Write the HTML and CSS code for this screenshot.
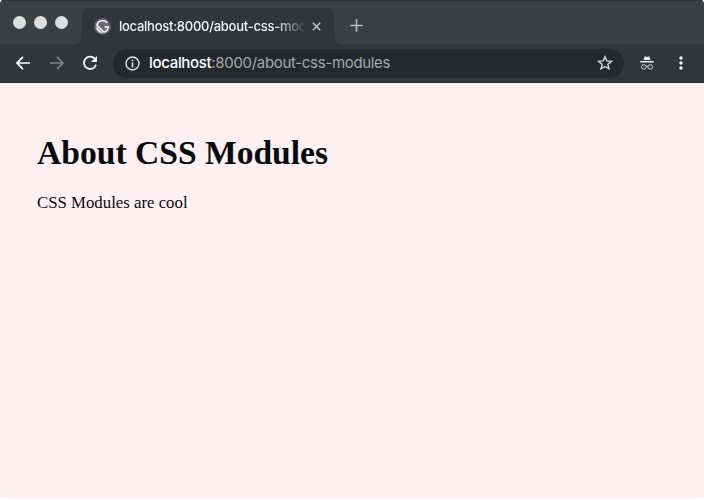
FILE: index.html
```html
<!DOCTYPE html>
<html lang="en">
<head>
<meta charset="utf-8">
<title>About CSS Modules</title>
<link rel="stylesheet" href="styles.css">
</head>
<body>
<div class="window">
  <header class="tabstrip">
    <div class="lights"><i></i><i></i><i></i></div>
    <div class="tab">
      <svg class="favicon" width="17" height="17" viewBox="0 0 17 17"><circle cx="8.5" cy="8.5" r="8.3" fill="#6d6777"/><path d="M13 4.8A5.9 5.9 0 0 0 2.8 7L10 14.2A6 6 0 0 0 14.2 9H10.5" fill="none" stroke="#fff" stroke-width="1.4"/><path d="M2.3 8.8L8.2 14.7A6 6 0 0 1 2.3 8.8z" fill="#fff" stroke="#fff" stroke-width=".5"/></svg>
      <span class="tab-title">localhost:8000/about-css-modules</span>
      <svg class="close" width="9" height="9" viewBox="0 0 9 9"><path d="M.8.8l7.4 7.4M8.2.8L.8 8.2" stroke="#c8c9cc" stroke-width="1.4"/></svg>
    </div>
    <svg class="plus" width="13" height="13" viewBox="0 0 13 13"><path d="M6.5.3v12.4M.3 6.5h12.4" stroke="#b9babd" stroke-width="1.6"/></svg>
  </header>
  <nav class="toolbar">
    <svg class="back" width="14" height="14" viewBox="0 0 14 14"><path d="M14 7H1.2M7 .9L1 7l6 6.1" fill="none" stroke="#fff" stroke-width="1.7"/></svg>
    <svg class="forward" width="14" height="14" viewBox="0 0 14 14"><path d="M0 7h12.8M7 .9L13 7l-6 6.1" fill="none" stroke="#85828a" stroke-width="1.6"/></svg>
    <svg class="reload" width="16" height="16" viewBox="0 0 16 16"><path d="M13.2 4.2A6.2 6.2 0 1 0 14 9.8" fill="none" stroke="#f4f4f5" stroke-width="1.8"/><path d="M15 1v6H9z" fill="#f4f4f5"/></svg>
    <div class="address">
      <svg width="15" height="15" viewBox="0 0 15 15"><circle cx="7.5" cy="7.5" r="6.5" fill="none" stroke="#e6e6e8" stroke-width="1.4"/><path d="M7.5 3.6v1.6M7.5 6.4v5" stroke="#e6e6e8" stroke-width="1.6"/></svg>
      <span class="url"><b>localhost</b>:8000/about-css-modules</span>
      <svg class="star" width="16" height="16" viewBox="0 0 16 16"><path d="M8 1.7l1.8 4.2 4.7.4-3.6 3 1.1 4.6L8 11.5l-4 2.4 1.1-4.6-3.6-3 4.7-.4z" fill="none" stroke="#d6d7da" stroke-width="1.4"/></svg>
    </div>
    <svg class="incognito" width="14" height="14" viewBox="0 0 14 14"><path d="M4.7.3L7 .9 9.3.3l1.2 3.6h-7zM.3 5.1h13.4v1.5H.3z" fill="#f4f4f5"/><g fill="none" stroke="#d3d3d6" stroke-width="1"><circle cx="3.8" cy="10.9" r="2.3"/><circle cx="10.2" cy="10.9" r="2.3"/><path d="M6 10.4q1-.6 2 0"/></g></svg>
    <svg class="menu" width="4" height="14" viewBox="0 0 4 14"><g fill="#f4f4f5"><circle cx="2" cy="2" r="1.7"/><circle cx="2" cy="7" r="1.7"/><circle cx="2" cy="12" r="1.7"/></g></svg>
  </nav>
  <main>
    <h1>About CSS Modules</h1>
    <p>CSS Modules are cool</p>
  </main>
</div>
</body>
</html>
```
FILE: styles.css
```css
* { box-sizing: border-box; }
body { margin: 0; background: #fff; }
svg { display: block; flex: none; }
.window {
  height: 498px;
  display: flex;
  flex-direction: column;
  border-radius: 4px;
  overflow: hidden;
  background: #fff0f4;
}
.tabstrip {
  height: 44px;
  flex: none;
  display: flex;
  align-items: flex-start;
  background: #3c4043;
  border-top: 1px solid #303438;
}
.lights { display: flex; gap: 8px; padding: 15px 0 0 13px; width: 82px; }
.lights i { width: 13px; height: 13px; border-radius: 50%; background: #dedede; }
.tab {
  position: relative;
  width: 252px;
  height: 36px;
  margin-top: 7px;
  padding: 0 12px 0 12px;
  display: flex;
  align-items: center;
  background: #323639;
  border-radius: 7px 7px 0 0;
}
.tab::before, .tab::after {
  content: "";
  position: absolute;
  bottom: 0;
  width: 7px;
  height: 7px;
}
.tab::before { left: -7px; background: radial-gradient(circle at 0 0, transparent 6.5px, #323639 7px); }
.tab::after { right: -7px; background: radial-gradient(circle at 100% 0, transparent 6.5px, #323639 7px); }
.tab-title {
  width: 185px;
  margin-left: 8px;
  overflow: hidden;
  white-space: nowrap;
  font: 500 13px/20px Inter, sans-serif;
  letter-spacing: -.26px;
  color: #f3f3f4;
  -webkit-mask-image: linear-gradient(90deg, #000 156px, transparent 187px);
  mask-image: linear-gradient(90deg, #000 156px, transparent 187px);
}
.close { margin-left: 8px; }
.plus { margin: 18px 0 0 16px; }
.toolbar {
  height: 39px;
  flex: none;
  display: flex;
  align-items: center;
  background: #323639;
  border-bottom: 1px solid #24282c;
}
.back { margin-left: 16px; }
.forward { margin-left: 20px; }
.reload { margin-left: 18px; }
.address {
  width: 511px;
  height: 29px;
  margin-left: 15px;
  padding: 0 11px 0 12px;
  display: flex;
  align-items: center;
  border-radius: 15px;
  background: #25292c;
}
.url { margin-left: 9px; font: 400 15px/20px Inter, sans-serif; letter-spacing: -.32px; color: #a6a5a9; white-space: nowrap; }
.url b { font-weight: 450; color: #fff; }
.star { margin-left: auto; }
.incognito { margin-left: 16px; }
.menu { margin-left: 25px; }
main { padding: 50px 37px; font-family: "Liberation Serif", serif; color: #080b0c; }
h1 { margin: 0; font-size: 33.6px; line-height: 39px; }
p { margin: 21px 0 0; font-size: 16.8px; line-height: 20px; }
```
